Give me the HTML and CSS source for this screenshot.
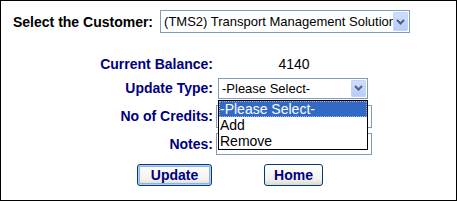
FILE: index.html
```html
<!doctype html>
<html lang="en">
  <head>
    <meta charset="UTF-8" />
    <meta name="viewport" content="width=device-width, initial-scale=1.0" />
    <title>Update Credits</title>
    <link rel="stylesheet" href="styles.css">
  </head>

  <body>
    <div class="frame">
      <div class="customer-row">
        <span class="customer-label">Select the Customer:</span>
        <div class="combo combo-customer">
          <span class="combo-text">(TMS2) Transport Management Solutions</span>
          <span class="combo-btn">
            <svg width="9" height="6" viewBox="0 0 9 6"><path d="M1 1 L4.5 4.5 L8 1" fill="none" stroke="#4d6185" stroke-width="2"/></svg>
          </span>
        </div>
      </div>

      <div class="form">
        <div class="lbl">Current Balance:</div>
        <div class="val balance">4140</div>

        <div class="lbl">Update Type:</div>
        <div class="val">
          <div class="combo combo-type">
            <span class="combo-text">-Please Select-</span>
            <span class="combo-btn">
              <svg width="9" height="6" viewBox="0 0 9 6"><path d="M1 1 L4.5 4.5 L8 1" fill="none" stroke="#4d6185" stroke-width="2"/></svg>
            </span>
            <!-- opened list lies over the inputs below -->
            <ul class="droplist">
              <li class="selected">-Please Select-</li>
              <li>Add</li>
              <li>Remove</li>
            </ul>
          </div>
        </div>

        <div class="lbl">No of Credits:</div>
        <div class="val"><div class="textbox textbox-credits"></div></div>

        <div class="lbl">Notes:</div>
        <div class="val"><div class="textbox textbox-notes"></div></div>

        <div class="btn-cell"><button class="btn btn-update">Update</button></div>
        <div class="val"><button class="btn btn-home">Home</button></div>
      </div>
    </div>
  </body>
</html>
```

FILE: styles.css
```css
* {
  font-family: "Liberation Sans", Arial, sans-serif;
  box-sizing: border-box;
}

body {
  margin: 0;
  background-color: #fff;
}

.frame {
  width: 457px;
  height: 201px;
  border: 1px solid #000;
}

/* top row */
.customer-row {
  display: flex;
  align-items: center;
  margin-top: 9px;
  padding-left: 12px;
}

.customer-label {
  font-size: 14px;
  font-weight: bold;
  color: #000;
  margin-right: 7px;
}

/* XP style combo box */
.combo {
  position: relative;
  display: flex;
  align-items: stretch;
  border: 1px solid #7f9db9;
  background-color: #fff;
  padding: 1px;
}

.combo-text {
  flex: 1;
  overflow: hidden;
  white-space: nowrap;
  font-size: 13px;
  color: #000;
  padding-left: 2px;
  display: flex;
  align-items: center;
}

.combo-btn {
  width: 15px;
  display: flex;
  align-items: center;
  justify-content: center;
  background: linear-gradient(#d0defd, #b8ccf8);
  border: 1px solid #c3d3fd;
  border-radius: 1px;
}

.combo-customer {
  width: 250px;
  height: 23px;
}

.combo-type {
  width: 150px;
  height: 21px;
  margin-left: 2px;
}

.droplist {
  position: absolute;
  top: 21px;
  left: -1px;
  width: 150px;
  margin: 0;
  padding: 0;
  list-style: none;
  border: 1px solid #000;
  background-color: #fff;
}

.droplist li {
  height: 16px;
  line-height: 16px;
  font-size: 14px;
  color: #000;
  padding-left: 1px;
}

.droplist .selected {
  background-color: #316ac5;
  color: #fff;
  outline: 1px dotted #9fb4dc;
  outline-offset: -1px;
}

/* form grid */
.form {
  display: grid;
  grid-template-columns: 212px 156px;
  grid-template-rows: 24px 24px 32px 23px 39px;
  column-gap: 3px;
  align-items: center;
  margin-top: 19px;
}

.lbl {
  text-align: right;
  font-size: 14px;
  font-weight: bold;
  color: #000080;
}

.balance {
  text-align: center;
  font-size: 14px;
  color: #000;
}

.textbox {
  width: 156px;
  border: 1px solid #7f9db9;
  background-color: #fff;
}

.textbox-credits {
  height: 23px;
}

.textbox-notes {
  height: 22px;
}

.btn-cell {
  display: flex;
  justify-content: flex-end;
}

.btn {
  height: 22px;
  font-size: 14px;
  font-weight: bold;
  color: #000080;
  background: linear-gradient(#ffffff, #f3f2ed 70%, #dcdad0);
  border: 1px solid #003c74;
  border-radius: 3px;
  padding: 0;
}

.btn-update {
  width: 75px;
  margin-right: 1px;
  box-shadow: inset 0 0 0 1px #b9cdf5, inset 0 0 0 2px #8eb1ea;
}

.btn-home {
  width: 59px;
  margin-left: 48px;
}
```
